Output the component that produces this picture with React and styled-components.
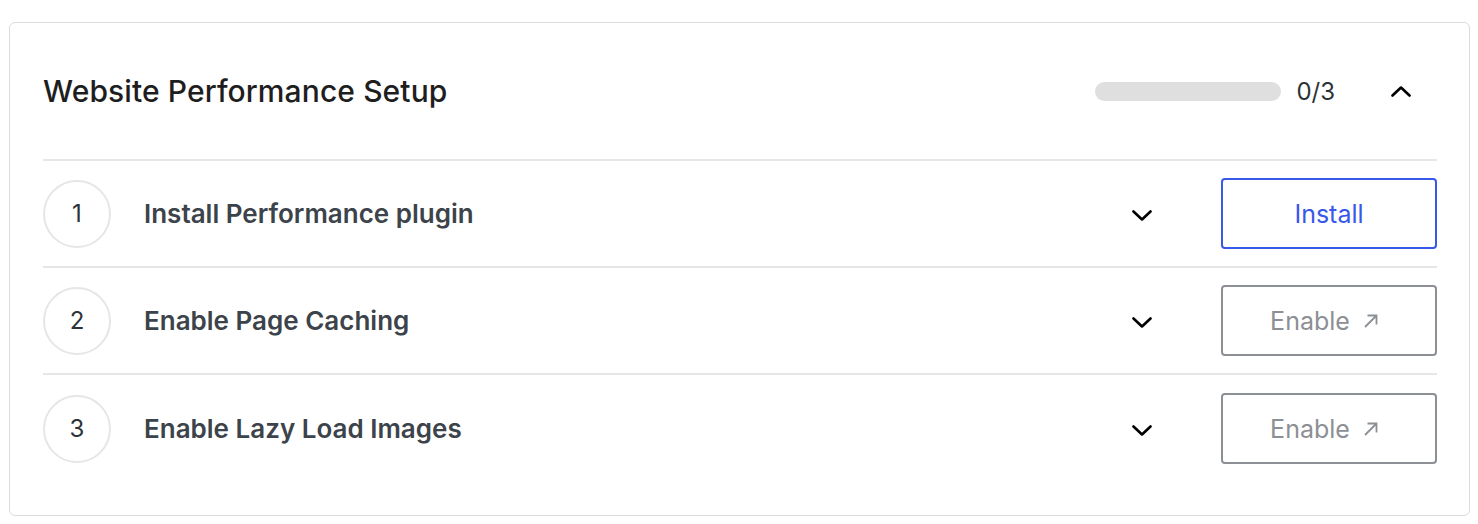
import React from 'react';
import styled, { createGlobalStyle } from 'styled-components';

const GlobalStyle = createGlobalStyle`
  body {
    margin: 0;
    background: #fff;
    font-family: Inter, "Noto Sans", "Liberation Sans", sans-serif;
  }
`;

const Page = styled.div`
  padding: 22px 8px 9px 9px;
`;

const Card = styled.section`
  border: 1px solid #dcdcde;
  border-radius: 6px;
  padding: 0 32px 33px 33px;
  background: #fff;
`;

const Header = styled.header`
  display: flex;
  align-items: center;
  height: 138px;
  box-sizing: border-box;
  border-bottom: 2px solid #e6e6e6;
`;

const Title = styled.h2`
  flex: 1;
  margin: 0;
  font-size: 30px;
  font-weight: 500;
  color: #1e1e1e;
  letter-spacing: 0.1px;
`;

const Progress = styled.div`
  width: 186px;
  height: 19px;
  border-radius: 10px;
  background: #dfdfdf;
`;

const Count = styled.span`
  margin-left: 15px;
  font-size: 24px;
  color: #2c3338;
`;

const Toggle = styled.button`
  display: flex;
  align-items: center;
  justify-content: center;
  margin-left: 50px;
  margin-right: 20px;
  width: 32px;
  height: 32px;
  padding: 0;
  border: none;
  background: none;
  color: #000;
`;

const Row = styled.div`
  display: flex;
  align-items: center;
  height: 107px;
  box-sizing: border-box;
  border-bottom: ${(p) => (p.$last ? 'none' : '2px solid #e6e6e6')};
`;

const Step = styled.div`
  width: 64px;
  height: 64px;
  border: 2px solid #e6e6e6;
  border-radius: 50%;
  display: flex;
  align-items: center;
  justify-content: center;
  font-size: 24px;
  color: #2c3338;
  flex-shrink: 0;
`;

const Label = styled.div`
  flex: 1;
  margin-left: 33px;
  font-size: 26px;
  font-weight: 600;
  color: #3c434a;
`;

const Expand = styled.button`
  display: flex;
  align-items: center;
  justify-content: center;
  width: 32px;
  height: 32px;
  margin-top: 4px;
  margin-right: 63px;
  padding: 0;
  border: none;
  background: none;
  color: #000;
`;

const Action = styled.button`
  width: 216px;
  height: 71px;
  box-sizing: border-box;
  display: flex;
  align-items: center;
  justify-content: center;
  gap: 14px;
  border-radius: 4px;
  background: #fff;
  font-family: inherit;
  font-size: 25px;
  border: 2px solid ${(p) => (p.$primary ? '#3858e9' : '#8c8f94')};
  color: ${(p) => (p.$primary ? '#3858e9' : '#8c8f94')};
`;

const Chevron = ({ up }) => (
  <svg width="20" height="11" viewBox="0 0 20 11" fill="none">
    <path
      d={up ? 'M1.5 9.5 L10 1.5 L18.5 9.5' : 'M1.5 1.5 L10 9.5 L18.5 1.5'}
      stroke="currentColor"
      strokeWidth="2.6"
      strokeLinecap="round"
      strokeLinejoin="round"
    />
  </svg>
);

const External = () => (
  <svg width="24" height="14" viewBox="0 0 24 14" fill="none">
    <path d="M1 13 L12 2 M3.5 1.5 H12.5 V10.5" stroke="currentColor" strokeWidth="1.8" />
  </svg>
);

const steps = [
  { n: 1, label: 'Install Performance plugin', action: 'Install', primary: true },
  { n: 2, label: 'Enable Page Caching', action: 'Enable' },
  { n: 3, label: 'Enable Lazy Load Images', action: 'Enable' },
];

export default function App() {
  return (
    <Page>
      <GlobalStyle />
      <Card>
        <Header>
          <Title>Website Performance Setup</Title>
          <Progress />
          <Count>0/3</Count>
          <Toggle aria-label="Collapse">
            <Chevron up />
          </Toggle>
        </Header>
        {steps.map((s, i) => (
          <Row key={s.n} $last={i === steps.length - 1}>
            <Step>{s.n}</Step>
            <Label>{s.label}</Label>
            <Expand aria-label="Expand">
              <Chevron />
            </Expand>
            <Action $primary={s.primary}>
              {s.action}
              {!s.primary && <External />}
            </Action>
          </Row>
        ))}
      </Card>
    </Page>
  );
}
